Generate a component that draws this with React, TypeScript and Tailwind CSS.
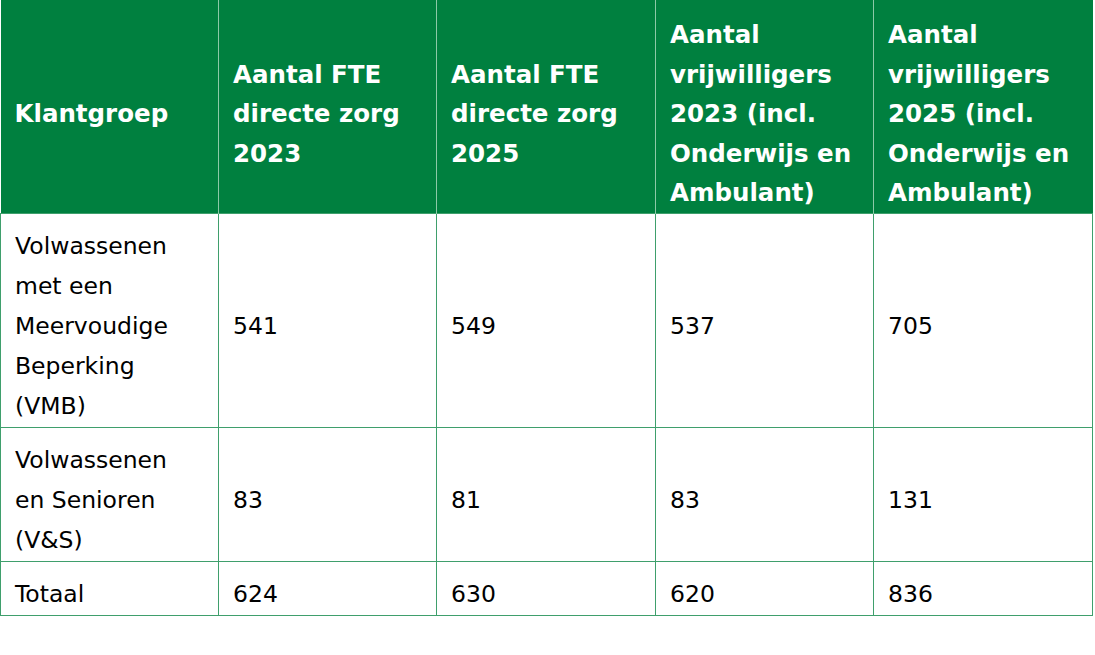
const HEAD = [
  "Klantgroep",
  "Aantal FTE directe zorg 2023",
  "Aantal FTE directe zorg 2025",
  "Aantal vrijwilligers 2023 (incl. Onderwijs en Ambulant)",
  "Aantal vrijwilligers 2025 (incl. Onderwijs en Ambulant)",
];

const ROWS: string[][] = [
  ["Volwassenen met een Meervoudige Beperking (VMB)", "541", "549", "537", "705"],
  ["Volwassenen en Senioren (V&S)", "83", "81", "83", "131"],
  ["Totaal", "624", "630", "620", "836"],
];

const FONT = "font-['DejaVu_Sans',Verdana,sans-serif]";

export default function App() {
  return (
    <div className={`w-[1095px] h-[655px] bg-white ${FONT}`}>
      <table className="table-fixed border-collapse w-[1092px]">
        <colgroup>
          <col className="w-[218px]" />
          <col className="w-[218px]" />
          <col className="w-[219px]" />
          <col className="w-[218px]" />
          <col className="w-[219px]" />
        </colgroup>
        <thead>
          <tr className="h-[213px] bg-[#00803f]">
            {HEAD.map((h, i) => (
              <th
                key={h}
                className={`pl-[14px] pr-[18px] pt-[15px] pb-0 text-left align-middle text-white font-bold text-[24.5px] leading-[39.5px] ${
                  i > 0 ? "border-l border-[#8cc9a7]" : ""
                }`}
              >
                {h}
              </th>
            ))}
          </tr>
        </thead>
        <tbody>
          {ROWS.map((r) => (
            <tr key={r[0]}>
              {r.map((c, i) => (
                <td
                  key={i}
                  className="border border-[#3f9f6c] pl-[14px] pr-[20px] pt-[12.5px] pb-[0.5px] align-middle text-black text-[23.5px] leading-[40px]"
                >
                  {c}
                </td>
              ))}
            </tr>
          ))}
        </tbody>
      </table>
    </div>
  );
}
